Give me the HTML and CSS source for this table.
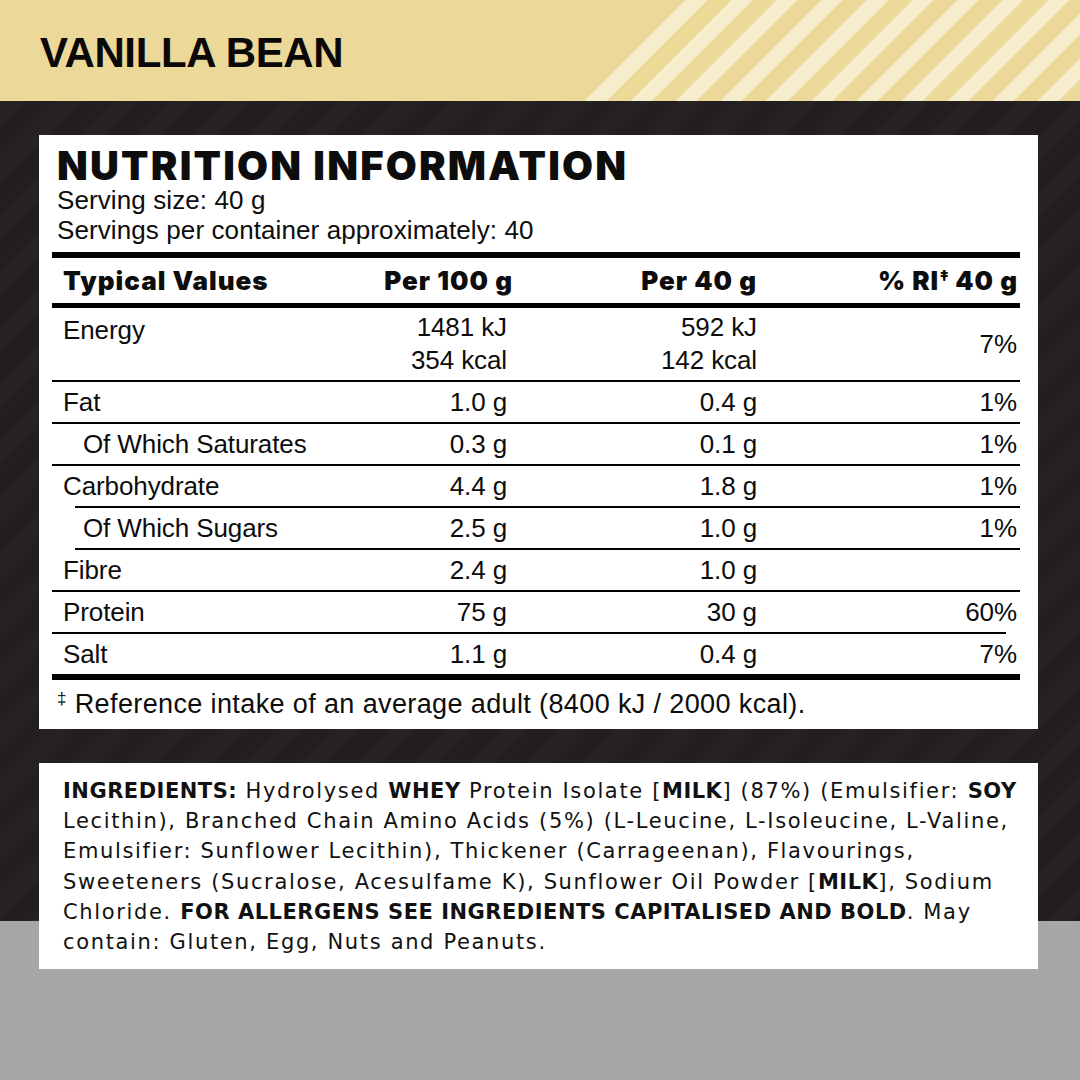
FILE: index.html
```html
<!DOCTYPE html>
<html lang="en">
<head>
<meta charset="utf-8">
<title>Vanilla Bean – Nutrition Information</title>
<link rel="stylesheet" href="styles.css">
</head>
<body>
<header class="flavour">
  <h1 class="flavour-name">VANILLA BEAN</h1>
</header>
<main class="panel">
  <section class="card nutrition">
    <h2 class="nutrition-title">NUTRITION INFORMATION</h2>
    <p class="serving">Serving size: 40 g<br>Servings per container approximately: 40</p>
    <div class="facts">
      <div class="row head">
        <span class="label">Typical Values</span>
        <span class="val c2">Per 100 g</span>
        <span class="val c3">Per 40 g</span>
        <span class="val c4">% RI<sup>‡</sup> 40 g</span>
      </div>
      <div class="row energy">
        <span class="label">Energy</span>
        <span class="val c2">1481 kJ<br>354 kcal</span>
        <span class="val c3">592 kJ<br>142 kcal</span>
        <span class="val c4">7%</span>
      </div>
      <div class="row">
        <span class="label">Fat</span>
        <span class="val c2">1.0 g</span>
        <span class="val c3">0.4 g</span>
        <span class="val c4">1%</span>
      </div>
      <div class="row">
        <span class="label sub">Of Which Saturates</span>
        <span class="val c2">0.3 g</span>
        <span class="val c3">0.1 g</span>
        <span class="val c4">1%</span>
      </div>
      <div class="row">
        <span class="label">Carbohydrate</span>
        <span class="val c2">4.4 g</span>
        <span class="val c3">1.8 g</span>
        <span class="val c4">1%</span>
      </div>
      <div class="row rule-indent">
        <span class="label sub">Of Which Sugars</span>
        <span class="val c2">2.5 g</span>
        <span class="val c3">1.0 g</span>
        <span class="val c4">1%</span>
      </div>
      <div class="row rule-indent">
        <span class="label">Fibre</span>
        <span class="val c2">2.4 g</span>
        <span class="val c3">1.0 g</span>
        <span class="val c4"></span>
      </div>
      <div class="row">
        <span class="label">Protein</span>
        <span class="val c2">75 g</span>
        <span class="val c3">30 g</span>
        <span class="val c4">60%</span>
      </div>
      <div class="row rule-short">
        <span class="label">Salt</span>
        <span class="val c2">1.1 g</span>
        <span class="val c3">0.4 g</span>
        <span class="val c4">7%</span>
      </div>
    </div>
    <p class="footnote"><sup>‡</sup> Reference intake of an average adult (8400 kJ / 2000 kcal).</p>
  </section>
  <section class="card ingredients">
    <p><b>INGREDIENTS:</b> Hydrolysed <b>WHEY</b> Protein Isolate [<b>MILK</b>] (87%) (Emulsifier: <b>SOY</b><br>Lecithin), Branched Chain Amino Acids (5%) (L-Leucine, L-Isoleucine, L-Valine,<br>Emulsifier: Sunflower Lecithin), Thickener (Carrageenan), Flavourings,<br>Sweeteners (Sucralose, Acesulfame K), Sunflower Oil Powder [<b>MILK</b>], Sodium<br>Chloride. <b>FOR ALLERGENS SEE INGREDIENTS CAPITALISED AND BOLD</b>. May<br>contain: Gluten, Egg, Nuts and Peanuts.</p>
  </section>
</main>
</body>
</html>
```

FILE: styles.css
```css
* { box-sizing: border-box; }

html, body {
  margin: 0;
  padding: 0;
}

body {
  width: 1080px;
  height: 1080px;
  overflow: hidden;
  background: #a7a7a9;
  color: #0d0d0d;
  font-family: "Liberation Sans", Arial, sans-serif;
}

/* ---------- flavour header ---------- */
.flavour {
  position: relative;
  height: 101px;
  background: #ecd899;
  padding: 31px 0 0 40px;
  overflow: hidden;
}

.flavour::after {
  content: "";
  position: absolute;
  left: 585px;
  top: 0;
  width: 495px;
  height: 101px;
  background: repeating-linear-gradient(135deg,
    #f6edcc -24.6px, #f6edcc -9.6px,
    #ecd899 -9.6px, #ecd899 7.4px);
  -webkit-mask-image: linear-gradient(135deg, transparent 71.4px, #000 71.4px);
  mask-image: linear-gradient(135deg, transparent 71.4px, #000 71.4px);
}

.flavour-name {
  position: relative;
  z-index: 1;
  margin: 0;
  font-family: "Liberation Sans", Arial, sans-serif;
  font-weight: 700;
  font-size: 42px;
  line-height: 44px;
  letter-spacing: -0.4px;
  color: #0a0808;
}

/* ---------- dark panel ---------- */
.panel {
  height: 979px;
  padding: 34px 42px 0 39px;
  background:
    repeating-linear-gradient(135deg, rgba(255,255,255,0.014) 0 18px, rgba(0,0,0,0) 18px 40px) 0 0 / 100% 820px no-repeat,
    linear-gradient(#231f20 0 820px, #a7a7a9 820px);
  display: flex;
  flex-direction: column;
  gap: 34px;
}

.card {
  background: #fff;
  width: 999px;
}

/* ---------- nutrition card ---------- */
.nutrition {
  height: 594px;
  padding: 12px 18px 0 13px;
}

.nutrition-title {
  margin: 0;
  padding-left: 5px;
  font-family: "Inter", "Liberation Sans", sans-serif;
  font-weight: 900;
  font-size: 40px;
  line-height: 38px;
  letter-spacing: 2.2px;
}

.serving {
  margin: 0 0 7px;
  padding-left: 5px;
  font-size: 26px;
  line-height: 30px;
  letter-spacing: 0.1px;
}

.facts {
  border-top: 6px solid #000;
  border-bottom: 6px solid #000;
}

.row {
  display: grid;
  grid-template-columns: minmax(0, 1fr) 230px 244px 261px;
  align-items: center;
  height: 42px;
  border-top: 2px solid #000;
  font-size: 26px;
  line-height: 33px;
  letter-spacing: -0.1px;
}

.row.head {
  border-top: 0;
  border-bottom: 5px solid #000;
  height: 50px;
  font-family: "Inter", "Liberation Sans", sans-serif;
  font-weight: 900;
  font-size: 26px;
  letter-spacing: 1px;
}

.row.head + .row { border-top: 0; }

.row.energy {
  height: 72px;
}

.row.energy .label {
  align-self: start;
  padding-top: 6px;
}

.row.rule-indent,
.row.rule-short {
  border-top: 0;
  padding-top: 2px;
  background: linear-gradient(#000, #000) no-repeat;
}

.row.rule-indent {
  background-position: 23px 0;
  background-size: calc(100% - 23px) 2px;
}

.row.rule-short {
  background-position: 0 0;
  background-size: calc(100% - 14px) 2px;
}

.label { padding-left: 11px; white-space: nowrap; }
.label.sub { padding-left: 31px; }

.val {
  text-align: right;
  white-space: nowrap;
}

.val.c2 { padding-right: 8px; }
.val.c3 { padding-right: 2px; }
.val.c4 { padding-right: 3px; }

.row.head .val.c2 { padding-right: 2px; }
.row.head .val.c4 { padding-right: 2px; }

.row.head sup {
  font-size: 15px;
  vertical-align: 9px;
  line-height: 0;
  letter-spacing: 0;
}

.footnote {
  margin: 0;
  padding-left: 5px;
  height: 48px;
  font-size: 27px;
  line-height: 48px;
  letter-spacing: 0.38px;
}

.footnote sup {
  font-size: 17px;
  vertical-align: 9px;
  line-height: 0;
}

/* ---------- ingredients card ---------- */
.ingredients {
  height: 206px;
  padding: 13px 10px 0 24px;
}

.ingredients p {
  margin: 0;
  white-space: nowrap;
  font-family: "DejaVu Sans", sans-serif;
  font-size: 21px;
  line-height: 30.2px;
  letter-spacing: 1.65px;
  color: #111;
}

.ingredients b {
  font-weight: 700;
  letter-spacing: 0.5px;
}
```
